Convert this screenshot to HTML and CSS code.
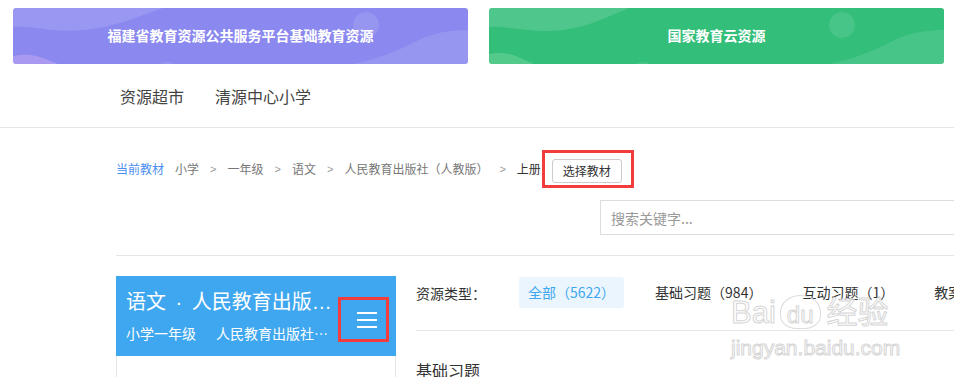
FILE: index.html
```html
<!DOCTYPE html>
<html lang="zh-CN">
<head>
    <meta charset="UTF-8">
    <title>资源超市</title>
    <link rel="stylesheet" href="styles.css">
</head>
<body>
<div class="banners">
    <a class="banner purple" href="#">
        <svg class="deco" viewBox="0 0 455 56" preserveAspectRatio="none">
            <path d="M0 0 H150 C120 10 90 26 40 22 C20 20 10 18 0 19 Z" fill="#fff" fill-opacity="0.12"/>
            <path d="M0 48 C20 44 30 50 45 56 H0 Z" fill="#e6b6f5" fill-opacity="0.35"/>
            <path d="M340 56 C370 50 390 40 410 30 C425 24 440 22 455 22 V56 Z" fill="#fff" fill-opacity="0.1"/>
            <circle cx="353" cy="17" r="13" fill="#fff" fill-opacity="0.1"/>
            <circle cx="154" cy="68" r="14" fill="#fff" fill-opacity="0.1"/>
        </svg>
        <span class="banner-text">福建省教育资源公共服务平台基础教育资源</span>
    </a>
    <a class="banner green" href="#">
        <svg class="deco" viewBox="0 0 455 56" preserveAspectRatio="none">
            <path d="M0 0 H140 C110 12 85 27 40 22 C20 20 10 18 0 19 Z" fill="#fff" fill-opacity="0.14"/>
            <path d="M0 46 C20 42 30 50 45 56 H0 Z" fill="#8fe0a8" fill-opacity="0.35"/>
            <path d="M340 56 C370 50 390 40 410 30 C425 24 440 22 455 22 V56 Z" fill="#fff" fill-opacity="0.1"/>
            <circle cx="353" cy="17" r="13" fill="#fff" fill-opacity="0.1"/>
            <circle cx="154" cy="68" r="14" fill="#fff" fill-opacity="0.1"/>
        </svg>
        <span class="banner-text">国家教育云资源</span>
    </a>
</div>

<div class="nav">
    <a href="#">资源超市</a>
    <a href="#">清源中心小学</a>
</div>

<div class="container">
    <div class="crumbs">
        <span class="current">当前教材</span>
        <span>小学</span>
        <span class="sep">&gt;</span>
        <span>一年级</span>
        <span class="sep">&gt;</span>
        <span>语文</span>
        <span class="sep">&gt;</span>
        <span>人民教育出版社（人教版）</span>
        <span class="sep">&gt;</span>
        <span class="last">上册</span>
        <span class="mark mark-btn"><button class="choose">选择教材</button></span>
    </div>

    <div class="search-row">
        <input class="search" type="text" placeholder="搜索关键字...">
    </div>

    <div class="main">
        <div class="side">
            <div class="book">
                <div class="book-info">
                    <div class="book-title">语文 · 人民教育出版社（人教版）</div>
                    <div class="book-sub">
                        <span>小学一年级</span>
                        <span class="pub">人民教育出版社（人教版）</span>
                    </div>
                </div>
                <span class="mark mark-menu">
                    <span class="menu"><i></i><i></i><i></i></span>
                </span>
            </div>
            <div class="side-body"></div>
        </div>

        <div class="content">
            <div class="types">
                <span class="types-label">资源类型：</span>
                <span class="type active">全部（5622）</span>
                <span class="type">基础习题（984）</span>
                <span class="type">互动习题（1）</span>
                <span class="type">教案（203）</span>
            </div>
            <h3 class="section">基础习题</h3>
        </div>
    </div>
</div>

<div class="watermark">
    <div class="wm-big">Bai<span class="paw">du</span>经验</div>
    <div class="wm-small">jingyan.baidu.com</div>
</div>
</body>
</html>
```

FILE: styles.css
```css
*{
    padding: 0;
    margin: 0;
    box-sizing: border-box;
}

html, body{
    background: #fff;
}

body{
    width: 954px;
    overflow: hidden;
    font-family: "Noto Sans CJK SC", "Liberation Sans", sans-serif;
    color: #333;
}

a{
    text-decoration: none;
    color: inherit;
}

/* 顶部两个横幅 */
.banners{
    display: flex;
    gap: 21px;
    padding: 8px 0 0 13px;
}

.banner{
    position: relative;
    width: 455px;
    height: 56px;
    border-radius: 3px;
    overflow: hidden;
    display: flex;
    align-items: center;
    justify-content: center;
    color: #fff;
    font-size: 14px;
    font-weight: bold;
}

.purple{
    background: #8b89ef;
}

.green{
    background: #33be7a;
}

.deco{
    position: absolute;
    left: 0;
    top: 0;
    width: 100%;
    height: 100%;
}

.banner-text{
    position: relative;
    margin-top: -2px;
}

/* 导航 */
.nav{
    height: 64px;
    padding: 20px 0 0 120px;
    display: flex;
    align-items: flex-start;
    gap: 31px;
    font-size: 16px;
    color: #444;
    border-bottom: 1px solid #e5e5e5;
}

.container{
    width: 1084px;
    margin-left: 116px;
}

/* 当前教材 */
.crumbs{
    display: flex;
    align-items: center;
    font-size: 12px;
    color: #777;
    padding-top: 22px;
    height: 59px;
}

.crumbs span{
    white-space: nowrap;
}

.crumbs .current{
    color: #4a8ef0;
    margin-right: 11px;
}

.crumbs .sep{
    margin: 0 11px;
    font-family: "Liberation Sans", sans-serif;
    font-size: 11px;
    color: #999;
}

.crumbs .last{
    color: #333;
}

/* 截图里的红色标注框 */
.mark{
    border: 3px solid #f33d3d;
}

.mark-btn{
    display: flex;
    padding: 6px 9px 2px 7px;
    margin-left: 1px;
}

.choose{
    height: 24px;
    padding: 0 10px;
    font-family: inherit;
    font-size: 12px;
    color: #333;
    background: #fff;
    border: 1px solid #ccc;
    border-radius: 3px;
}

.search-row{
    display: flex;
    justify-content: flex-end;
    padding: 13px 0 20px;
    border-bottom: 1px solid #e5e5e5;
}

.search{
    width: 600px;
    height: 35px;
    border: 1px solid #ddd;
    padding: 0 10px;
    font-family: inherit;
    font-size: 14px;
    outline: none;
}

.search::placeholder{
    color: #999;
}

/* 主体 */
.main{
    display: flex;
    gap: 20px;
    padding-top: 20px;
}

.side{
    width: 280px;
}

.book{
    height: 80px;
    background: #3fa7ef;
    color: #fff;
    display: flex;
    align-items: flex-start;
    padding: 10px 7px 0 10px;
}

.book-info{
    width: 212px;
}

.book-title{
    font-family: "Liberation Sans", "Noto Sans CJK SC", sans-serif;
    font-size: 20px;
    line-height: 32px;
    word-spacing: 4px;
    white-space: nowrap;
    overflow: hidden;
    text-overflow: ellipsis;
}

.book-sub{
    display: flex;
    gap: 20px;
    font-size: 14px;
    line-height: 20px;
    margin-top: 5px;
}

.book-sub span{
    white-space: nowrap;
}

.book-sub .pub{
    width: 118px;
    overflow: hidden;
    text-overflow: ellipsis;
}

.mark-menu{
    margin-left: auto;
    margin-top: 11px;
    width: 52px;
    height: 45px;
    display: flex;
    align-items: center;
    justify-content: center;
}

.menu{
    display: flex;
    flex-direction: column;
    gap: 5px;
    width: 20px;
    margin-left: 6px;
}

.menu i{
    display: block;
    height: 2px;
    background: #fff;
}

.side-body{
    height: 200px;
    border: 1px solid #e5e5e5;
    border-top: 0;
}

.content{
    flex: 1;
}

.types{
    display: flex;
    align-items: center;
    font-size: 14px;
    padding: 1px 0 22px;
    border-bottom: 1px solid #e5e5e5;
    white-space: nowrap;
}

.types-label{
    margin-right: 33px;
}

.type{
    height: 31px;
    line-height: 31px;
    padding: 0 9px;
    margin-right: 22px;
    border-radius: 3px;
}

.type.active{
    background: #eaf5fe;
    color: #3fa7ef;
}

.section{
    font-size: 16px;
    font-weight: normal;
    line-height: 24px;
    margin-top: 27px;
}

/* 百度经验水印 */
.watermark{
    position: absolute;
    left: 731px;
    top: 293px;
    color: rgba(255, 255, 255, 0.5);
    -webkit-text-stroke: 1px #d6d6d6;
    font-family: "Liberation Sans", "Noto Sans CJK SC", sans-serif;
    pointer-events: none;
}

.wm-big{
    font-size: 31px;
    line-height: 40px;
    white-space: nowrap;
}

.paw{
    display: inline-block;
    font-size: 24px;
    padding: 6px 6px 0;
    margin: 0 6px 0 4px;
    border: 1px solid #dcdcdc;
    border-radius: 50% 50% 40% 40%;
    line-height: 26px;
}

.wm-small{
    font-size: 21px;
    line-height: 30px;
}
```
